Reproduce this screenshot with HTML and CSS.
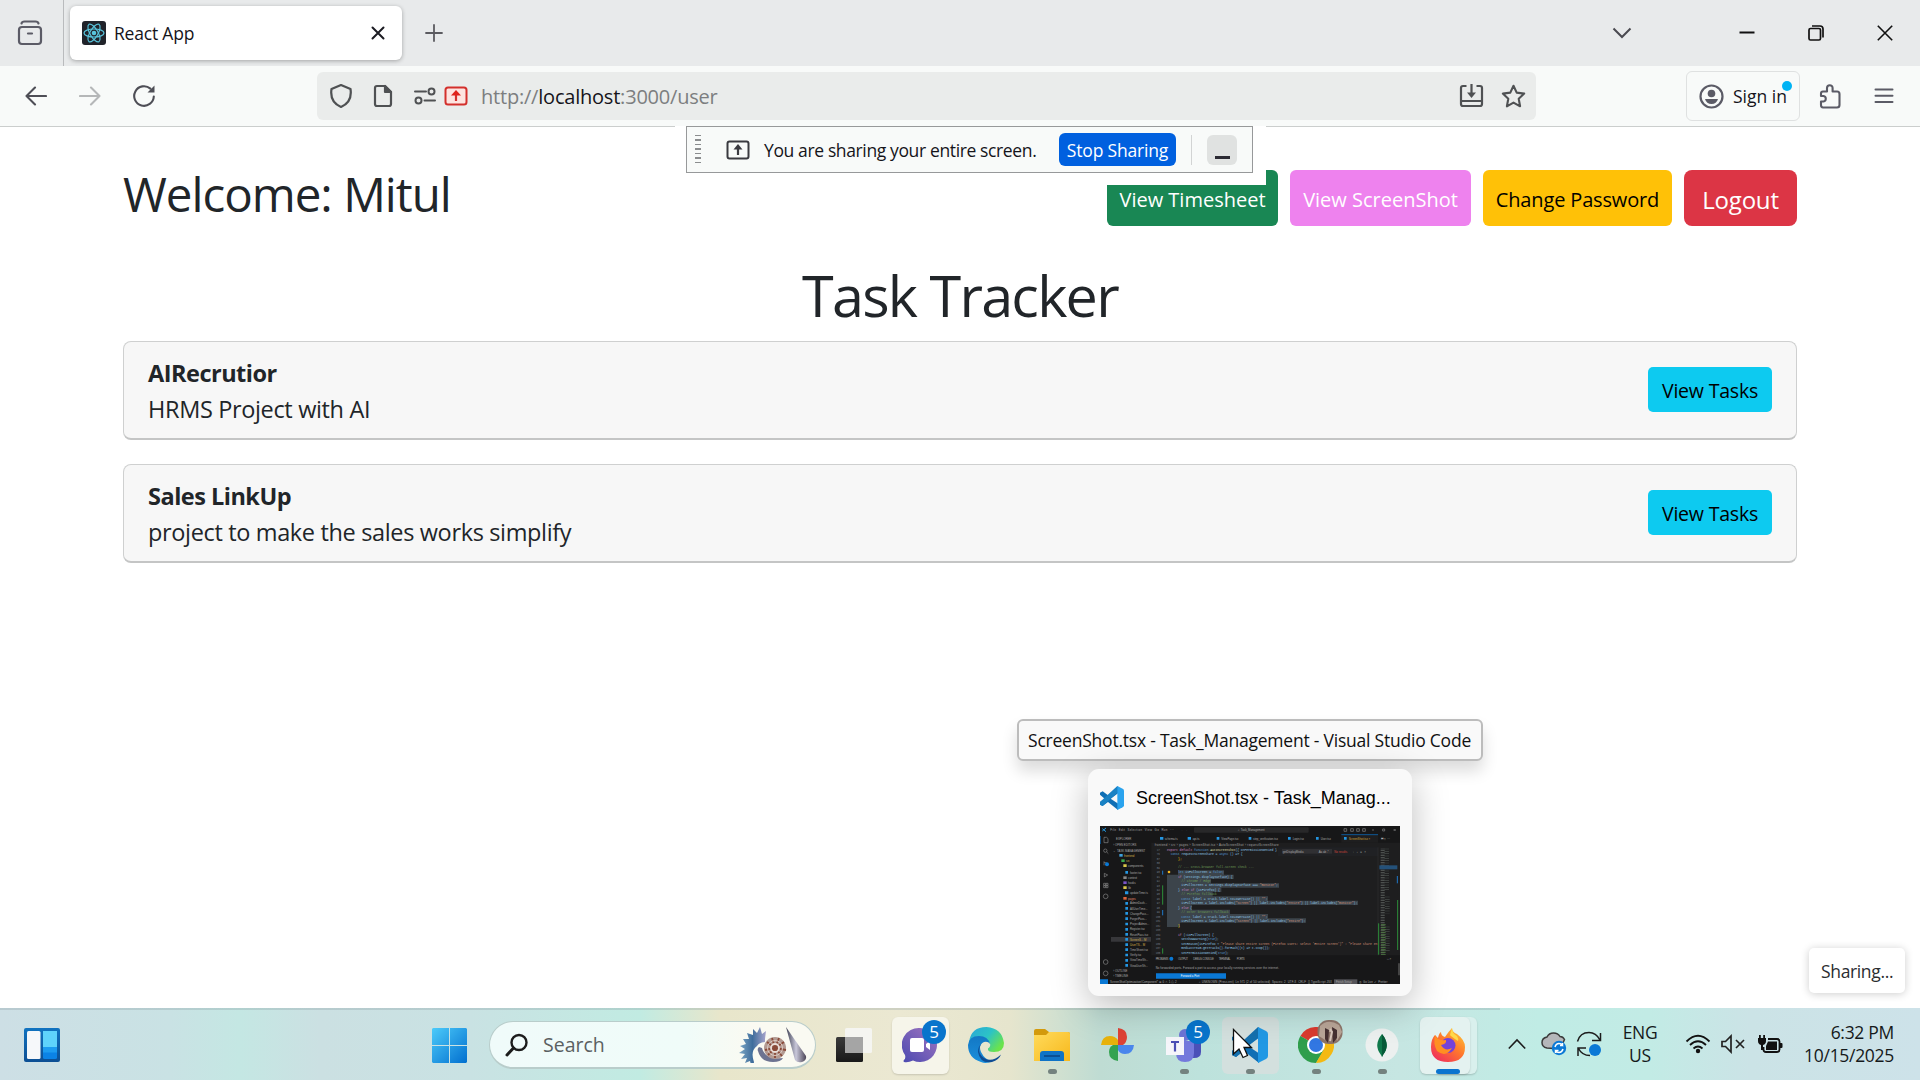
FILE: index.html
```html
<!DOCTYPE html>
<html lang="en">
<head>
<meta charset="utf-8">
<title>React App</title>
<link rel="stylesheet" href="styles.css">
</head>
<body>
<div class="desktop">
  <div class="tabstrip">
    <div class="firefox-view">
      <svg width="26" height="26" viewBox="0 0 26 26" fill="none" stroke="#5b5b66" stroke-width="2.2" stroke-linecap="round"><path d="M4.500 3.500Q5 1.500 7.500 1.500H18.500Q21 1.500 21.500 3.500"/><rect x="2" y="7" width="22" height="17" rx="3"/><path d="M11 13.500h4"/></svg>
    </div>
    <div class="tab">
      <svg width="24" height="24" viewBox="0 0 24 24"><rect width="24" height="24" rx="3" fill="#20232a"/><g fill="none" stroke="#58c4dc" stroke-width="1.200"><ellipse cx="12" cy="12" rx="10" ry="4"/><ellipse cx="12" cy="12" rx="10" ry="4" transform="rotate(60 12 12)"/><ellipse cx="12" cy="12" rx="10" ry="4" transform="rotate(120 12 12)"/></g><circle cx="12" cy="12" r="2.300" fill="#58c4dc"/></svg>
      <span class="tab-title">React App</span>
      <svg class="tab-close" width="14" height="14" viewBox="0 0 14 14" stroke="#1b1b22" stroke-width="2" stroke-linecap="round"><path d="M1.500 1.500l11 11M12.500 1.500l-11 11"/></svg>
    </div>
    <svg class="new-tab" width="18" height="18" viewBox="0 0 18 18" stroke="#5b5b60" stroke-width="1.800" stroke-linecap="round"><path d="M9 1v16M1 9h16"/></svg>
    <div class="window-controls">
      <svg width="20" height="12" viewBox="0 0 20 12" fill="none" stroke="#4a4a50" stroke-width="2"><path d="M1.500 1.500L10 10l8.500-8.500"/></svg>
      <svg width="16" height="16" viewBox="0 0 16 16" stroke="#111" stroke-width="2"><path d="M.5 7.500h15"/></svg>
      <svg width="16" height="16" viewBox="0 0 16 16" fill="none" stroke="#111" stroke-width="1.700"><rect x="1" y="3.500" width="11.500" height="11.500" rx="1.500"/><path d="M4 1h8q3 0 3 3v8.500"/></svg>
      <svg width="16" height="16" viewBox="0 0 16 16" stroke="#111" stroke-width="1.600"><path d="M.8.8l14.400 14.400M15.200.8L.8 15.200"/></svg>
    </div>
  </div>

  <div class="toolbar">
    <div class="nav">
      <svg width="22" height="20" viewBox="0 0 22 20" fill="none" stroke="#4e4e56" stroke-width="2.100" stroke-linecap="round" stroke-linejoin="round"><path d="M21 10H1.500M10 1.500L1.500 10l8.500 8.500"/></svg>
      <svg width="22" height="20" viewBox="0 0 22 20" fill="none" stroke="#b5b7b8" stroke-width="2.100" stroke-linecap="round" stroke-linejoin="round"><path d="M1 10h19.500M12 1.500l8.500 8.500-8.500 8.500"/></svg>
      <svg width="24" height="24" viewBox="0 0 24 24" fill="none" stroke="#4e4e56" stroke-width="2.100" stroke-linecap="round"><path d="M21.800 12.500a9.800 9.800 0 1 1-3.400-7.900"/><path d="M22.500 1.500v7h-7z" fill="#4e4e56" stroke="none"/></svg>
    </div>
    <div class="urlbar">
      <svg class="i-shield" width="24" height="26" viewBox="0 0 24 26" fill="none" stroke="#4f5153" stroke-width="2.200" stroke-linejoin="round"><path d="M12 2l9.500 4Q23.500 19 12 24 .5 19 2.500 6z"/></svg>
      <svg class="i-page" width="20" height="24" viewBox="0 0 20 24" fill="none" stroke="#4f5153" stroke-width="2.200" stroke-linejoin="round"><path d="M4 2h8l6 6v12q0 2-2 2H4q-2 0-2-2V4q0-2 2-2z"/><path d="M12 2v6h6z" fill="#4f5153"/></svg>
      <svg class="i-perm" width="22" height="18" viewBox="0 0 22 18" fill="none" stroke="#4f5153" stroke-width="2" stroke-linecap="round"><path d="M1 4.500h11M10.500 13.500h10.500"/><circle cx="17.500" cy="4.500" r="3"/><circle cx="4.500" cy="13.500" r="3"/></svg>
      <svg class="i-screen" width="24" height="20" viewBox="0 0 24 20" fill="none" stroke="#d3302c" stroke-width="2"><rect x="1.500" y="1.500" width="21" height="17" rx="2.500" fill="#fde4e0"/><path d="M12 15V8" stroke-width="2.200"/><path d="M7 9.500L12 4l5 5.500z" fill="#e0231c" stroke="none"/></svg>
      <span class="url">http://<b>localhost</b>:3000/user</span>
      <div class="url-actions">
        <svg width="25" height="24" viewBox="0 0 25 24" fill="none" stroke="#4f5153" stroke-width="2.200" stroke-linejoin="round"><path d="M7.500 2H4Q2 2 2 4v16q0 2 2 2h17q2 0 2-2V4q0-2-2-2h-3.500M2 17h21"/><path d="M12.500 0v11"/><path d="M8 8.500h9L12.500 14z" fill="#4f5153" stroke="none"/></svg>
        <svg width="25" height="24" viewBox="0 0 25 24" fill="none" stroke="#4f5153" stroke-width="2.100" stroke-linejoin="round"><path d="M12.500 1.800l3.200 6.800 7.500 1-5.500 5.200 1.400 7.500-6.600-3.700-6.600 3.700 1.400-7.500L1.800 9.600l7.500-1z"/></svg>
      </div>
    </div>
    <div class="signin">
      <svg width="25" height="25" viewBox="0 0 25 25"><circle cx="12.500" cy="12.500" r="11" fill="none" stroke="#5b5b66" stroke-width="2.200"/><circle cx="12.500" cy="9.500" r="3.800" fill="#5b5b66"/><path d="M6 15h13q-1.500 5-6.500 5T6 15z" fill="#5b5b66"/></svg>
      <span class="signin-label">Sign in</span>
      <i class="signin-dot"></i>
    </div>
    <svg class="puzzle" width="22" height="25" viewBox="0 0 22 25" fill="none" stroke="#5b5b66" stroke-width="2.100" stroke-linejoin="round"><path d="M4 7.500H8V4a2.800 2.800 0 0 1 5.600 0v3.500H18q2.500 0 2.500 2.500V21q0 2.500-2.500 2.500H4Q2 23.500 2 21v-3.500h2.500a2.800 2.800 0 0 0 0-5.500H2V9.500q0-2 2-2z"/></svg>
    <svg class="menu" width="20" height="16" viewBox="0 0 20 16" stroke="#5b5b66" stroke-width="2" stroke-linecap="round"><path d="M1.500 1.500h17M1.500 7.800h17M1.500 14h17"/></svg>
  </div>

  <main class="page">
    <header class="page-head">
      <h2 class="welcome">Welcome: Mitul</h2>
      <div class="actions">
        <button class="btn btn-green">View Timesheet</button>
        <button class="btn btn-violet">View ScreenShot</button>
        <button class="btn btn-yellow">Change Password</button>
        <button class="btn btn-red">Logout</button>
      </div>
    </header>
    <h1 class="title">Task Tracker</h1>
    <section class="cards">
      <article class="card">
        <div><strong>AIRecrutior</strong><p>HRMS Project with AI</p></div>
        <button class="btn-tasks">View Tasks</button>
      </article>
      <article class="card">
        <div><strong>Sales LinkUp</strong><p>project to make the sales works simplify</p></div>
        <button class="btn-tasks">View Tasks</button>
      </article>
    </section>
  </main>

  <footer class="taskbar">
    <svg class="widgets" width="36" height="34" viewBox="0 0 36 34"><defs><linearGradient id="wg" x2="0" y2="1"><stop offset="0" stop-color="#1173c0"/><stop offset="1" stop-color="#0c4f94"/></linearGradient></defs><rect width="36" height="34" rx="2" fill="url(#wg)"/><rect x="3" y="3" width="13.500" height="28" rx="1.500" fill="#f6f8fa"/><rect x="19" y="3" width="14" height="28" rx="1.500" fill="#0b83e6"/><path d="M19 3h14v16H19z" fill="#5fd3fb"/><path d="M19 19h14v5.500H19z" fill="#1d9cf0"/></svg>
    <svg class="start" width="35" height="35" viewBox="0 0 35 35"><defs><linearGradient id="win" x2="1" y2="1"><stop offset="0" stop-color="#4ccbfa"/><stop offset="1" stop-color="#026fcf"/></linearGradient></defs><path fill="url(#win)" d="M1 0h16v17H0V1zM18 0h16l1 1v16H18zM0 18h17v17H1l-1-1zM18 18h17v16l-1 1H18z"/></svg>
    <div class="search">
      <svg width="24" height="24" viewBox="0 0 24 24" fill="none" stroke="#1c1c1c" stroke-width="2.400"><circle cx="14" cy="9.500" r="7.500"/><path d="M8.500 15L2 22" stroke-width="3" stroke-linecap="round"/></svg>
      <span class="search-label">Search</span>
      <svg class="shells" width="68" height="36" viewBox="0 0 68 36"><defs><linearGradient id="sh1" x2="1"><stop offset="0" stop-color="#7fa9c6"/><stop offset=".5" stop-color="#3f6d9c"/><stop offset="1" stop-color="#a8a4cc"/></linearGradient><linearGradient id="sh2" x2="1"><stop offset="0" stop-color="#3c3e50"/><stop offset=".5" stop-color="#c9c8da"/><stop offset="1" stop-color="#4c4556"/></linearGradient></defs><path fill="url(#sh1)" d="M26 12l1-8-4 3-2-7-3 6-4-4 0 6-6-2 2 6-6 0 3 5-6 2 5 3-6 4 6 1-4 5 6-1-2 5 5-2 1 4q3 0 3-3-4-11 3-16 3-4 8-4z"/><path d="M20 20q-2 2-1 4 3 11 15 11 8 0 10-4-18 2-21-10z" fill="#6d7391"/><ellipse cx="36" cy="21" rx="11" ry="11" fill="#b39a92"/><g stroke="#8a4a38" stroke-width="1.800" fill="none"><path d="M36 21l-3-10M36 21l4-10M36 21l9-6M36 21l11 2M36 21l7 8M36 21v10M36 21l-8-6M36 21l-10 2M36 21l-7 7"/></g><circle cx="36" cy="21" r="4" fill="none" stroke="#e9ded8" stroke-width="1.800"/><circle cx="36" cy="21" r="7.500" fill="none" stroke="#dccbc3" stroke-width="1"/><path fill="url(#sh2)" d="M47 0L67 29q1 4-4 6-5 1-7-2z"/></svg>
    </div>
    <div class="apps">
      <div class="app"><svg width="36" height="36" viewBox="0 0 36 36"><defs><linearGradient id="tv" x2="0" y2="1"><stop offset="0" stop-color="#3a3a3a"/><stop offset="1" stop-color="#191919"/></linearGradient></defs><rect y="10" width="27" height="25" rx="1.500" fill="url(#tv)"/><rect x="9" y="1" width="27" height="25" rx="1.500" fill="#f6f6f4" fill-opacity=".9"/><path d="M9 10h18v16H10.500Q9 26 9 24.500z" fill="#a5a5a5"/></svg></div>
      <div class="app"><div class="tile tile-light"><svg width="36" height="36" viewBox="0 0 36 36"><defs><linearGradient id="ch" x1="1" x2="0" y2="1"><stop offset="0" stop-color="#a276c0"/><stop offset="1" stop-color="#4a49b0"/></linearGradient></defs><path fill="url(#ch)" d="M18 1a17 17 0 1 1-7 32.500Q6 36 2 35q-1-1 0-2 2-2 1-5A17 17 0 0 1 18 1z"/><rect x="8" y="11" width="14" height="14" rx="2" fill="#fff"/><path d="M24 17l4-3v9l-4-3z" fill="#fff"/></svg></div><b class="badge">5</b></div>
      <div class="app"><svg width="36" height="36" viewBox="0 0 36 36"><defs><linearGradient id="e1" x2="1" y2=".6"><stop offset="0" stop-color="#2aa5d8"/><stop offset=".55" stop-color="#2cc3c6"/><stop offset="1" stop-color="#6be34b"/></linearGradient><linearGradient id="e2" x2="0" y2="1"><stop offset="0" stop-color="#1377c4"/><stop offset="1" stop-color="#1a8fdc"/></linearGradient></defs><path fill="url(#e1)" d="M1 15Q3 0 18.500 0 34 1 36 16q0 9-10 9-7 0-6-3.500 3-2 2-5Q19 10 10 10.500 4 11 1 15z"/><path fill="url(#e2)" d="M0 18Q1 9 11 9q9 0 11 8-2-3-6-2-6 3-3 10 4 8 11 9.500Q18 37 13 35 0 31 0 18z"/><path fill="#0f4d94" d="M13 17q-5 9 3 14 8 5 17-3.500Q31 33 24 35 12 37 10 25q0-5 3-8z"/></svg></div>
      <div class="app"><svg width="36" height="36" viewBox="0 0 36 36"><defs><linearGradient id="fo" x2="1" y2="1"><stop offset="0" stop-color="#ffdb5c"/><stop offset="1" stop-color="#f7b81c"/></linearGradient></defs><path d="M0 4q0-2 2-2h9l4 3h19q2 0 2 2v9H0z" fill="#d39a0c"/><path d="M0 8h12l3-3h19q2 0 2 2v27H0z" fill="url(#fo)"/><path d="M6 34V27q0-3 3-3h18q3 0 3 3v7z" fill="#0f73c6"/><path d="M10 29h16" stroke="#0a4f94" stroke-width="2"/></svg><i class="pill"></i></div>
      <div class="app"><svg width="36" height="36" viewBox="0 0 36 36"><path d="M18 18V1q9 1 9 9 0 5-4 8z" fill="#de4335"/><path d="M18 18h16q-1 9-9 9-5 0-7-4z" fill="#4a86ec"/><path d="M18 18v16q-9-1-9-9 0-5 4-7z" fill="#34a350"/><path d="M18 18H1q1-9 9-9 5 0 8 4z" fill="#e8b20c"/></svg></div>
      <div class="app"><svg width="36" height="36" viewBox="0 0 36 36"><circle cx="19" cy="8" r="6" fill="#6c74d6"/><path d="M26 14h9v11q0 6-7 6h-4z" fill="#4b50b8"/><path d="M10 14h18v12q0 9-9 9t-9-9z" fill="#7479dc"/><rect y="10" width="18" height="18" fill="#f5f5fa"/><path d="M5 15h8M9 15v9.500" stroke="#4b4fb5" stroke-width="2.200"/></svg><b class="badge">5</b><i class="pill"></i></div>
      <div class="app"><div class="tile tile-hover"><svg width="36" height="36" viewBox="0 0 36 36"><path d="M27 0L12 14 4 8 0 10v3l7 6-7 5v4l4 2 8-6 15 12 1-9-12-8 12-9z" fill="#0f6fb5"/><path d="M0 24L26 0v10L4 30 0 28z" fill="#1470ae"/><path d="M26 0l8 4q2 1 2 3v22q0 2-2 3l-8 4z" fill="#2198e4"/></svg></div><i class="pill"></i></div>
      <div class="app"><svg width="36" height="36" viewBox="0 0 36 36"><path d="M18 18L2.400 9A18 18 0 0 1 33.600 9z" fill="#d93a2f"/><path d="M18 18L2.400 9A18 18 0 0 0 18 36l8-13z" fill="#2f9e4c"/><path d="M18 9h15.600A18 18 0 0 1 18 36l8-14z" fill="#f4b912"/><circle cx="18" cy="18" r="9" fill="#fff"/><circle cx="18" cy="18" r="7" fill="#3277e2"/></svg>
        <svg class="avatar" width="26" height="26" viewBox="0 0 26 26"><rect x=".5" y="1" width="25" height="24" rx="11" fill="#8d7469"/><path d="M3 7q8-8 19-1l3 7-5 9-3-9-6 0-3 8-6-4z" fill="#b9a597"/><path d="M8 9l4 2-1 13-3-4zM15 8l5 3v8l-4 5z" fill="#463031"/><path d="M13 10l2 3-2 9" stroke="#d8c6bb" stroke-width="2" fill="none"/></svg><i class="pill"></i></div>
      <div class="app"><svg width="36" height="36" viewBox="0 0 36 36"><circle cx="18" cy="18" r="16.500" fill="#ecf0ef"/><path d="M18 7q9 11 1 21l-1 2-1-2q-8-10 1-21z" fill="#10794b"/><path d="M18 7q9 11 1 21l-1 2z" fill="#075a38"/></svg><i class="pill"></i></div>
      <div class="app app-ff"><div class="tile tile-back"></div><div class="tile tile-active"><svg width="36" height="36" viewBox="0 0 36 36"><defs><linearGradient id="ff" x1="1" x2=".2" y2="1"><stop offset="0" stop-color="#ffd53a"/><stop offset=".5" stop-color="#ff7a2b"/><stop offset="1" stop-color="#f02f5c"/></linearGradient></defs><path fill="url(#ff)" d="M22 1q0 4 5 6 8 6 8 13 0 15-17 15T1 20q0-8 4-12l3 3q1-5 3-6 0 4 4 5 4-6 7-9z"/><circle cx="18" cy="18.500" r="7.500" fill="#7442d8"/><path d="M5 8q2 6 11 5 1 4-5 5 4 7 11 3-6 10-15 3-4-7-2-16z" fill="#ff8f22"/><path d="M22 1q0 5 5 8 2 3 1 5-6-4-8-6z" fill="#ffd94a"/></svg></div><i class="pill pill-active"></i></div>
    </div>
    <div class="tray">
      <svg class="tray-chevron" width="18" height="12" viewBox="0 0 18 12" fill="none" stroke="#1c1c1c" stroke-width="1.600"><path d="M.8 10.500L9 2l8.200 8.500"/></svg>
      <svg class="tray-cloud" width="26" height="26" viewBox="0 0 26 26"><path d="M6 17q-5-1-5-5.500T6 6q2-4 6.500-4T19 5.500q3 0 4.500 3L19 18z" fill="#b5b7ba" stroke="#3b3b3b" stroke-width="1.500"/><circle cx="18" cy="17" r="7.200" fill="#0b79d6"/><path d="M14 16q1-3.500 4-3.500 2 0 3.500 1.500v-2M22 18q-1 3.500-4 3.500-2 0-3.500-1.500v2M19 14.500h3M14.500 19.500h3" stroke="#fff" stroke-width="1.500" fill="none"/></svg>
      <svg class="tray-sync" width="26" height="26" viewBox="0 0 26 26" fill="none" stroke="#1c1c1c" stroke-width="1.500"><path d="M1.500 10.500Q4 1.500 13 1.500q7 0 11 7.500M24.500 2v7.500H16M14 24.500Q6 24.500 2.500 17.500M2 25v-8h8"/><circle cx="19" cy="19" r="6" fill="#0b79d6" stroke="none"/></svg>
      <div class="lang"><span>ENG</span><span>US</span></div>
      <svg class="tray-wifi" width="26" height="20" viewBox="0 0 26 20" fill="none" stroke="#111" stroke-width="1.800"><path d="M1.500 7.500Q13-4 24.500 7.500M5 11Q13 3.500 21 11M8.500 14.500Q13 10.500 17.500 14.500"/><circle cx="13" cy="17" r="2.200" fill="#111" stroke="none"/></svg>
      <svg class="tray-vol" width="24" height="20" viewBox="0 0 24 20" fill="none" stroke="#222" stroke-width="1.700"><path d="M1 7.500v5h3.500l5.500 5.500V2L4.500 7.500zM15 6l8 8M23 6l-8 8"/></svg>
      <svg class="tray-bat" width="26" height="21" viewBox="0 0 26 21"><path d="M11 5h9q2.500 0 2.500 2.500v8q0 2.500-2.500 2.500H9q-2.500 0-2.500-2.500V13" fill="none" stroke="#111" stroke-width="1.800"/><path d="M9 12l2-4.500h9V16H9zM23 9h1.500q1 0 1 1v3q0 1-1 1H23zM1 4h8v3q0 3-3 4v5H4v-5q-3-1-3-4zM2 1h1.800v3H2zM6.200 1H8v3H6.200z" fill="#111"/></svg>
      <div class="clock"><span class="time">6:32 PM</span><span class="date">10/15/2025</span></div>
    </div>
  </footer>

  <div class="share-wrap">
    <div class="share-bar">
      <i class="grip"></i>
      <svg class="share-icon" width="24" height="20" viewBox="0 0 24 20" fill="none" stroke="#3a3a40" stroke-width="2"><rect x="1.500" y="1.500" width="21" height="17" rx="2"/><path d="M12 15V8" stroke-width="2.200"/><path d="M7.500 9.500L12 4l4.500 5.500z" fill="#3a3a40" stroke="none"/></svg>
      <span class="share-text">You are sharing your entire screen.</span>
      <button class="stop">Stop Sharing</button>
      <i class="share-div"></i>
      <button class="share-min"><i></i></button>
    </div>
  </div>

  <div class="tooltip"><span>ScreenShot.tsx - Task_Management - Visual Studio Code</span></div>

  <div class="preview">
    <div class="preview-head">
      <svg width="24" height="24" viewBox="0 0 36 36"><path d="M27 0L12 14 4 8 0 10v3l7 6-7 5v4l4 2 8-6 15 12 1-9-12-8 12-9z" fill="#0f6fb5"/><path d="M0 24L26 0v10L4 30 0 28z" fill="#1a82c4"/><path d="M26 0l8 4q2 1 2 3v22q0 2-2 3l-8 4z" fill="#2aa3ee"/></svg>
      <span>ScreenShot.tsx - Task_Manag...</span>
    </div>
    <svg class="code" width="300" height="158" viewBox="300 378 900 474">
      <rect x="300" y="378" width="900" height="474" fill="#1e1e1f"/>
      <path d="M300 378h900v26H300zM300 404h154v434H300zM300 404h900v24H300zM454 766h746v72H454zM300 838h900v14H300z" fill="#171718"/>
      <path d="M1024 404h110v24h-110z" fill="#1e1e1f"/><path d="M1024 404h110" stroke="#0a78d4" stroke-width="2"/>
      <rect x="582" y="382" width="344" height="16" rx="3" fill="#282829"/><rect x="834" y="442" width="300" height="26" fill="#202124"/><rect x="846" y="447" width="150" height="14" fill="#303033"/>
      <path d="M333 711h120v14H333z" fill="#37373a"/>
      <path d="M501 524h200v13h-68v13h204v13H664v13h-26v13h166v13h270v13H576v14h114v13h114v13h114v13H540v13h-39zM534 511h138v13H534z" fill="#3c444b"/>
      <path d="M1134 442v324" stroke="#2f2f30" stroke-width="2"/>
      <g fill="none" stroke-dasharray="2 3"><path d="M1148 446v320" stroke="#5c625f" stroke-width="12"/><path d="M1160 446v60M1160 512v60M1162 590v50M1162 680v76" stroke="#454b48" stroke-width="14" stroke-dasharray="2 5"/><path d="M1150 672v92" stroke="#4d7a41" stroke-width="14"/></g>
      <path d="M1138 496h54v12h-54z" fill="#245179"/><path d="M1193 600v150M1136 670v94M488 556v58M488 745v16" stroke="#2c8f3a" stroke-width="3"/><path d="M488 512v12M488 630v16M1192 528v22" stroke="#1f78c8" stroke-width="3"/>
      <path d="M468 820h210v16H468zM300 838h24v14h-24z" fill="#0a78d4"/><path d="M1002 838h70v14h-70z" fill="#55555a"/><path d="M1194 790h6v36h-6z" fill="#444"/>
      <g stroke="#868686" stroke-width="2" fill="none"><path d="M312 412h8l4 4v12h-12zM313 520l10 5-10 6zM311 550h6v6h-6zM318 550h6v6h-6zM311 557h6v6h-6zM318 557h6v6h-6z"/><circle cx="316" cy="452" r="5"/><path d="M320 456l5 5M312 484v12M312 488h8"/><circle cx="317" cy="589" r="7"/><circle cx="317" cy="786" r="7"/><circle cx="317" cy="820" r="7"/><path d="M1032 386h8v8h-8zM1052 386h8v8h-8zM1070 386h8v8h-8zM1088 386h8v8h-8zM1116 390h6M1148 387h6v6h-6zM1181 387l6 6M1187 387l-6 6"/></g>
      <circle cx="321" cy="493" r="6" fill="#0a78d4"/><circle cx="514" cy="776" r="6" fill="#0a78d4"/><circle cx="507" cy="516" r="4" fill="#f4b821"/>
      <path d="M318 384l-11 9M307 386l11 9" stroke="#2398e0" stroke-width="3"/>
      <path d="M301 408v24" stroke="#0a78d4" stroke-width="2"/>
      <g fill="#2497e3"><path d="M480 411h10v8h-10zM563 411h10v8h-10zM650 411h8v8h-8zM746 411h8v8h-8zM864 411h8v8h-8zM948 411h8v8h-8zM1032 411h8v8h-8zM376 513h8v8h-8zM375 574h10v9h-10zM376 606h8v8h-8zM376 621h8v8h-8zM376 636h8v8h-8zM376 652h8v8h-8zM376 668h8v8h-8zM376 684h8v8h-8zM376 699h8v8h-8zM376 714h8v8h-8zM376 730h8v8h-8zM376 745h8v8h-8zM376 761h8v8h-8zM376 777h8v8h-8zM376 792h8v8h-8z"/></g>
      <path d="M358 462h10v8h-10z" fill="#3fa2dd"/><path d="M364 478h10v8h-10z" fill="#3aa84c"/><path d="M370 493h10v8h-10zM370 559h10v8h-10z" fill="#d8c74a"/><path d="M370 529h10v8h-10z" fill="#888"/><path d="M370 544h10v8h-10z" fill="#7a55c9"/><path d="M370 591h10v8h-10z" fill="#e0643a"/>
      <g class="ui-text">
        <text x="331" y="393" textLength="190">File&#160; Edit&#160; Selection&#160; View&#160; Go&#160; Run&#160; ···</text><text x="544" y="393">← →</text><text x="714" y="393">⌕ Task_Management</text>
        <text x="348" y="419">EXPLORER</text><text x="494" y="419">schema.ts</text><text x="578" y="419">api.ts</text><text x="664" y="419">ViewPage.tsx</text><text x="759" y="419">step_verification.tsx</text><text x="878" y="419">Login.tsx</text><text x="962" y="419">User.tsx</text><text x="1046" y="419" fill="#d8a83a">ScreenShot.tsx ×</text><text x="1142" y="419">⇄ ▯ ···</text>
        <text x="340" y="439">› OPEN EDITORS</text><text x="340" y="455">⌄ TASK MANAGEMENT</text><text x="372" y="470" fill="#d8b24a">frontend</text><text x="378" y="486" fill="#d8b24a">src</text><text x="384" y="501">components</text><text x="390" y="521">footer.tsx</text><text x="384" y="536">context</text><text x="384" y="552">hooks</text><text x="384" y="567">lib</text><text x="390" y="582">updateTime.ts</text><text x="384" y="599" fill="#e0866a">pages</text><text x="390" y="613">AdminDash...</text><text x="390" y="629">AllUserTime...</text><text x="390" y="644">ChangePass...</text><text x="390" y="660">ForgetPass...</text><text x="390" y="676">ProjectAdmin...</text><text x="390" y="691">Register.tsx</text><text x="390" y="707">ResetPass.tsx</text><text x="390" y="722" fill="#d8b24a">ScreenS... M</text><text x="390" y="737" fill="#d8b24a">UserTS... M</text><text x="390" y="753">TimeSheet.tsx</text><text x="390" y="769">Verify.tsx</text><text x="390" y="784">ViewTimeSh...</text><text x="390" y="800">ViewUserSh...</text><text x="340" y="817">› OUTLINE</text><text x="340" y="832">› TIMELINE</text>
        <text x="464" y="439" textLength="372">frontend › src › pages › ScreenShot.tsx › AutoScreenShot › requestScreenShare</text>
        <text x="848" y="458">getDisplayMedia</text><text x="956" y="458">Aa ab .*</text><text x="1003" y="458" fill="#d5483c">No results</text><text x="1058" y="458">↑&#160;&#160; ↓&#160;&#160; ≡&#160;&#160; ×</text>
        <text x="467" y="779" textLength="38">PROBLEMS</text><text x="534" y="779" textLength="30">OUTPUT</text><text x="580" y="779" textLength="62">DEBUG CONSOLE</text><text x="656" y="779" textLength="36">TERMINAL</text><text x="710" y="779" textLength="24">PORTS</text><text x="1160" y="779">⛶ ×</text>
        <text x="467" y="808" textLength="370">No forwarded ports. Forward a port to access your locally running services over the internet.</text><text x="542" y="832" fill="#fff">Forward a Port</text>
        <text x="330" y="848" textLength="200">ScreenShotOptimization/Component* ⊗ 0 ⚠ 1 ⓘ 2</text><text x="596" y="848" textLength="400">⌕ UNKNOWN (Press ent)&#160; Ln 971 (2 of 50 selected)&#160; Spaces: 2&#160; UTF-8&#160; CRLF&#160; {} TypeScript JSX</text><text x="1008" y="848">Finish Setup</text><text x="1078" y="848">◎ Go Live&#160; ✓ Prettier</text>
      </g>
      <g class="src">
        <text x="501" y="453" textLength="330"><tspan fill="#c586c0">export default</tspan> <tspan fill="#569cd6">function</tspan> <tspan fill="#dcdcaa">AutoScreenshot</tspan>({ onPermissionDenied }</text>
        <text x="512" y="466" textLength="216"><tspan fill="#569cd6">const</tspan> requestScreenShare = <tspan fill="#569cd6">async</tspan> () =&gt; {</text>
        <text x="534" y="480" fill="#ffd700">};</text>
        <text x="534" y="505" textLength="228" fill="#6a9955">// --- Cross-browser full-screen check ---</text>
        <text x="534" y="520" textLength="138"><tspan fill="#569cd6">let</tspan> isFullScreen = <tspan fill="#569cd6">false</tspan>;</text>
        <text x="534" y="533" textLength="164"><tspan fill="#c586c0">if</tspan> (settings.displaySurface) {</text>
        <text x="544" y="546" textLength="88" fill="#6a9955">// Chrome / Edge</text>
        <text x="544" y="559" textLength="290">isFullScreen = settings.displaySurface === <tspan fill="#ce9178">"monitor"</tspan>;</text>
        <text x="534" y="573" textLength="126">} <tspan fill="#c586c0">else if</tspan> (isFirefox) {</text>
        <text x="544" y="586" textLength="106" fill="#6a9955">// Firefox fallback</text>
        <text x="544" y="599" textLength="258"><tspan fill="#569cd6">const</tspan> label = track.label.toLowerCase() || <tspan fill="#ce9178">""</tspan>;</text>
        <text x="544" y="613" textLength="528">isFullScreen = label.includes(<tspan fill="#ce9178">"screen"</tspan>) || label.includes(<tspan fill="#ce9178">"entire"</tspan>) || label.includes(<tspan fill="#ce9178">"monitor"</tspan>);</text>
        <text x="534" y="626" textLength="42">} <tspan fill="#c586c0">else</tspan> {</text>
        <text x="544" y="640" textLength="142" fill="#6a9955">// Other browsers fallback</text>
        <text x="544" y="654" textLength="258"><tspan fill="#569cd6">const</tspan> label = track.label.toLowerCase() || <tspan fill="#ce9178">""</tspan>;</text>
        <text x="544" y="667" textLength="372">isFullScreen = label.includes(<tspan fill="#ce9178">"screen"</tspan>) || label.includes(<tspan fill="#ce9178">"entire"</tspan>);</text>
        <text x="534" y="680" fill="#ffd700">}</text>
        <text x="534" y="707" textLength="108"><tspan fill="#c586c0">if</tspan> (!isFullScreen) {</text>
        <text x="544" y="720" textLength="112">setShowWarning(<tspan fill="#569cd6">true</tspan>);</text>
        <text x="544" y="734" textLength="588">setReason(isFirefox ? <tspan fill="#ce9178">"Please share entire screen (Firefox users: select 'Entire Screen')" : "Please share en</tspan></text>
        <text x="544" y="747" textLength="266">mediaStream.getTracks().forEach((t) =&gt; t.stop());</text>
        <text x="544" y="761" textLength="142">setPermissionDenied(<tspan fill="#569cd6">true</tspan>);</text>
      </g>
      <g class="lines"><text x="470" y="453">17</text><text x="470" y="466">76</text><text x="470" y="480">87</text><text x="470" y="493">88</text><text x="470" y="507">89</text><text x="470" y="520">90</text><text x="470" y="533">91</text><text x="470" y="546">92</text><text x="470" y="560">93</text><text x="470" y="573">94</text><text x="470" y="586">95</text><text x="470" y="600">96</text><text x="470" y="613">97</text><text x="470" y="627">98</text><text x="470" y="640">99</text><text x="467" y="654">100</text><text x="467" y="667">101</text><text x="467" y="681">102</text><text x="467" y="694">103</text><text x="467" y="707">104</text><text x="467" y="720">105</text><text x="467" y="734">106</text><text x="467" y="747">107</text><text x="467" y="761">108</text></g>
    </svg>
  </div>

  <div class="toast"><span>Sharing...</span></div>

  <svg class="cursor" width="22" height="32" viewBox="0 0 22 32"><path d="M1.500 1.500v24.500l5.500-5 4 8.500 4.500-2-3.500-8h7.500z" fill="#fff" stroke="#111" stroke-width="1.300"/></svg>
</div>
</body>
</html>
```
FILE: styles.css
```css
* { box-sizing: border-box; }
body { margin: 0; font-family: "Open Sans", "Noto Sans", sans-serif; color: #212529; }
h1, h2, p { margin: 0; font-weight: 400; }
button { border: 0; padding: 0; font: inherit; color: inherit; letter-spacing: inherit; }
svg { display: block; flex: none; }
span, h1, h2, p, strong, button { white-space: nowrap; }

.desktop { position: relative; width: 1920px; height: 1080px; overflow: hidden; background: #fff; display: flex; flex-direction: column; }

.tabstrip { height: 66px; flex: none; background: #e8eaeb; display: flex; align-items: center; }
.firefox-view { width: 64px; height: 66px; border-right: 1px solid #b9bbbd; display: flex; align-items: center; padding-left: 17px; }
.tab { width: 332px; height: 54px; margin-left: 6px; padding: 0 17px 0 12px; background: #fff; border-radius: 6px; box-shadow: 0 1px 4px rgba(0, 0, 0, .3); display: flex; align-items: center; gap: 8px; }
.tab-title { font-size: 17.5px; letter-spacing: -.2px; color: #15141a; }
.tab-close { margin-left: auto; }
.new-tab { margin-left: 23px; }
.window-controls { margin-left: auto; padding-right: 27px; display: flex; align-items: center; }
.window-controls svg:nth-child(2) { margin-left: 107px; }
.window-controls svg:nth-child(n+3) { margin-left: 53px; }

.toolbar { height: 61px; flex: none; background: #f8faf9; border-bottom: 1px solid #cbcecd; display: flex; align-items: center; }
.nav { width: 317px; padding-left: 25px; display: flex; align-items: center; gap: 31.5px; }
.urlbar { width: 1219px; height: 48px; background: #eaeceb; border-radius: 6px; padding: 0 10px 0 12px; display: flex; align-items: center; }
.i-page { margin-left: 20px; }
.i-perm { margin-left: 21px; }
.i-screen { margin-left: 8px; }
.url { margin-left: 13px; font-size: 20px; letter-spacing: -.21px; color: #7c7e80; padding-top: 1px; }
.url b { font-weight: 400; color: #15141a; }
.url-actions { margin-left: auto; display: flex; gap: 17px; }
.signin { position: relative; width: 114px; height: 50px; margin-left: 150px; padding-left: 12px; border: 1px solid #dfe1e1; border-radius: 6px; display: flex; align-items: center; gap: 9px; }
.signin-label { font-size: 17.5px; color: #15141a; }
.signin-dot { position: absolute; left: 95px; top: 9px; width: 10px; height: 10px; border-radius: 50%; background: #00b3f4; }
.puzzle { margin-left: 19px; }
.menu { margin-left: 33px; }

.page { flex: 1; padding: 43px 123px 0; }
.page-head { height: 56px; display: flex; align-items: center; justify-content: space-between; }
.welcome { font-size: 47.5px; letter-spacing: -1.02px; line-height: 56px; margin-top: -8px; }
.actions { display: flex; gap: 12px; }
.btn { height: 56px; border-radius: 6px; font-size: 20px; color: #fff; padding-top: 2px; }
.btn-green { width: 171px; background: #198754; }
.btn-violet { width: 181px; background: #ee82ee; }
.btn-yellow { width: 189px; background: #ffc107; color: #000; letter-spacing: -.15px; }
.btn-red { width: 113px; background: #dc3545; border-radius: 8px; font-size: 24px; letter-spacing: -.2px; }
.title { font-size: 57.5px; letter-spacing: -1.75px; line-height: 72px; margin: 33px 0 10px; text-align: center; }
.cards { display: flex; flex-direction: column; gap: 24px; }
.card { height: 99px; padding: 2px 24px 0; background: #f7f7f7; border: 1px solid #cfd0d0; border-bottom: 2px solid #c4c5c5; border-radius: 8px; display: flex; align-items: center; justify-content: space-between; line-height: 36px; font-size: 23.5px; letter-spacing: -.35px; }
.card strong { display: block; font-weight: 700; letter-spacing: -.5px; }
.btn-tasks { width: 124px; height: 45px; margin-bottom: 4px; padding-top: 4px; background: #0dcaf0; color: #000; font-size: 19.5px; letter-spacing: -.2px; border-radius: 5px; }

.taskbar { height: 72px; flex: none; display: flex; align-items: center; padding: 2px 0 0 24px; background: linear-gradient(rgba(120, 140, 145, .25), rgba(120, 140, 145, .25)) 0 0 / 1500px 2px no-repeat, linear-gradient(90deg, #cddfe5 0, #c9e2e4 170px, #c4e7e3 240px, #cbe0e2 320px, #c9e2e3 470px, #c1ebe2 640px, #e8e6cb 720px, #ebe8d2 900px, #e6e5cd 1010px, #bfdcd3 1100px, #bde2dc 1200px, #c6e6e2 1400px, #c0ece5 1540px, #c2ebe5 1650px, #cbe3e6 1750px, #cde2e9 1920px); color: #15191b; }
.start { margin-left: 372px; }
.search { width: 327px; height: 48px; margin-left: 22px; padding: 0 8px 0 15px; border-radius: 24px; background: linear-gradient(90deg, #f0fbfa, #f0fcf9 60%, #fafaf2 80%); border: 1px solid #b9cdcb; border-bottom-width: 2px; display: flex; align-items: center; }
.search-label { margin-left: 14px; font-size: 19.5px; color: #5a6061; }
.shells { margin-left: auto; }
.apps { margin-left: 5px; display: flex; }
.app { position: relative; width: 66px; height: 70px; display: flex; align-items: center; justify-content: center; }
.tile { width: 57px; height: 57px; border-radius: 6px; display: flex; align-items: center; justify-content: center; }
.tile-light { background: #f6f5ea; box-shadow: 0 1px 2px rgba(0, 0, 0, .15); }
.tile-hover { background: #d3e0de; }
.tile-active { position: relative; width: 50px; background: #e4f2f0; box-shadow: 0 1px 2px rgba(0, 0, 0, .18); margin-right: 6px; }
.tile-active svg { margin-left: 5px; }
.tile-back { position: absolute; left: 20px; top: 7px; width: 42px; background: #d9f0ed; box-shadow: 0 1px 2px rgba(0, 0, 0, .18); }
.badge { position: absolute; left: 35px; top: 10px; width: 24px; height: 24px; border-radius: 50%; background: #0874cc; color: #fff; font-size: 17px; line-height: 24px; font-weight: 400; text-align: center; }
.pill { position: absolute; left: 29px; bottom: 6px; width: 9px; height: 5px; border-radius: 3px; background: #74827f; }
.pill-active { left: 21px; width: 24px; background: #0b74cf; }
.avatar { position: absolute; left: 34px; top: 9px; }
.tray { flex: 1; margin-top: -2px; display: flex; align-items: center; }
.tray-chevron { margin-left: 27px; }
.tray-cloud { margin-left: 15px; }
.tray-sync { margin-left: 9px; }
.lang { width: 60px; margin-left: 8px; text-align: center; }
.lang, .clock { font-size: 17.5px; letter-spacing: -.3px; line-height: 23px; display: flex; flex-direction: column; }
.tray-wifi { margin-left: 15px; }
.tray-vol { margin-left: 10px; }
.tray-bat { margin-left: 12px; }
.clock { margin-left: auto; margin-right: 26px; text-align: right; align-items: flex-end; }

.share-wrap { position: absolute; left: 675px; top: 126px; width: 591px; height: 59px; padding: 0 13px 12px 11px; background: #fff; }
.share-bar { height: 47px; border: 1px solid #97999a; background: #f8faf9; display: flex; align-items: center; padding-left: 8px; font-size: 17.5px; color: #15141a; }
.grip { width: 6px; height: 30px; background: repeating-linear-gradient(#8b8d8f 0 1.5px, transparent 1.5px 4.5px); }
.share-icon { margin-left: 25px; }
.share-text { width: 295px; margin-left: 14px; letter-spacing: -.37px; }
.stop { width: 117px; height: 33px; border-radius: 6px; background: #0060df; color: #fff; letter-spacing: -.18px; }
.share-div { width: 1px; height: 30px; margin-left: 15px; background: #d2d4d4; }
.share-min { width: 30px; height: 30px; margin-left: 15px; border-radius: 6px; background: #e0e2e1; display: flex; align-items: flex-end; justify-content: center; padding-bottom: 6px; }
.share-min i { width: 15px; height: 3px; background: #2b2a33; }

.tooltip { position: absolute; left: 1017px; top: 719px; width: 466px; height: 42px; padding-left: 9px; border: 2px solid #bcbcbc; border-radius: 6px; background: #f9f9f9; box-shadow: 0 10px 16px rgba(0, 0, 0, .14); font-size: 17.5px; letter-spacing: -.22px; line-height: 38px; color: #111; }
.preview { position: absolute; left: 1088px; top: 769px; width: 324px; height: 227px; padding: 0 12px; border-radius: 11px; background: #f9f9f9; box-shadow: 0 10px 36px rgba(0, 0, 0, .26); }
.preview-head { height: 57px; display: flex; align-items: center; gap: 12px; font: 18px "Liberation Sans", Arial, sans-serif; color: #000; }
.preview-head span { padding-top: 2px; }
.code .ui-text { font: 8.5px "Liberation Sans", sans-serif; fill: #a9a9a9; }
.code .src { font: 9.5px "Liberation Mono", monospace; fill: #8fc7e6; }
.code .lines { font: 8px "Liberation Mono", monospace; fill: #6e7681; }

.toast { position: absolute; left: 1809px; top: 948px; width: 96px; height: 45px; padding-left: 12px; border-radius: 5px; background: #fff; box-shadow: 0 1px 8px rgba(0, 0, 0, .2); font-size: 17.5px; letter-spacing: -.35px; line-height: 47px; color: #2a2d30; }
.cursor { position: absolute; left: 1232px; top: 1028px; }
```
